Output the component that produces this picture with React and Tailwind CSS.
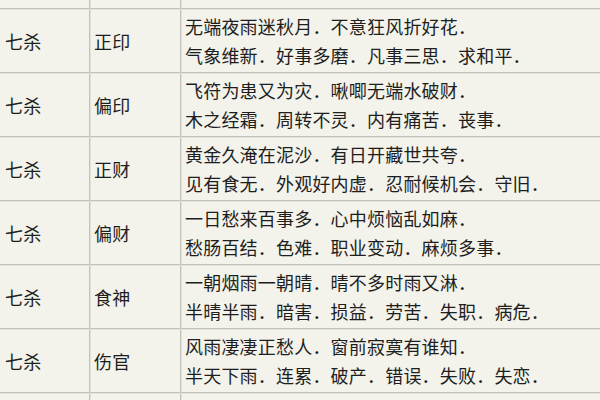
import React from "react";

const rows = [
  ["七杀", "正印", "无端夜雨迷秋月．不意狂风折好花．", "气象维新．好事多磨．凡事三思．求和平．"],
  ["七杀", "偏印", "飞符为患又为灾．啾唧无端水破财．", "木之经霜．周转不灵．内有痛苦．丧事．"],
  ["七杀", "正财", "黄金久淹在泥沙．有日开藏世共夸．", "见有食无．外观好内虚．忍耐候机会．守旧．"],
  ["七杀", "偏财", "一日愁来百事多．心中烦恼乱如麻．", "愁肠百结．色难．职业变动．麻烦多事．"],
  ["七杀", "食神", "一朝烟雨一朝晴．晴不多时雨又淋．", "半晴半雨．暗害．损益．劳苦．失职．病危．"],
  ["七杀", "伤官", "风雨凄凄正愁人．窗前寂寞有谁知．", "半天下雨．连累．破产．错误．失败．失恋．"],
];

const font = { fontFamily: '"Noto Sans CJK SC", "Noto Sans", sans-serif' };

function VLine() {
  return (
    <div className="w-[2px] flex">
      <div className="w-px bg-[#c2c2ba]" />
      <div className="w-px bg-[#e2e2da]" />
    </div>
  );
}

function HLine() {
  return (
    <div className="flex flex-col">
      <div className="h-px bg-[#c2c2ba]" />
      <div className="h-px bg-[#e2e2da]" />
    </div>
  );
}

function Row({ a, b, c, d }) {
  return (
    <div className="flex h-[62px]">
      <div className="w-[89px] flex items-center pl-[5px] text-[18px] tracking-[0.3px]">{a}</div>
      <VLine />
      <div className="w-[89px] flex items-center pl-[3px] text-[18px] tracking-[0.3px]">{b}</div>
      <VLine />
      <div className="flex-1 flex flex-col justify-center pl-[3px] text-[18px] leading-[29px] tracking-[0.2px] whitespace-nowrap">
        <div>{c}</div>
        <div>{d}</div>
      </div>
    </div>
  );
}

function Spacer() {
  return (
    <div className="flex h-[8px]">
      <div className="w-[89px]" />
      <VLine />
      <div className="w-[89px]" />
      <VLine />
      <div className="flex-1" />
    </div>
  );
}

export default function App() {
  return (
    <div className="w-[600px] h-[400px] overflow-hidden bg-[#f3f3eb] text-[#1e1e1e]" style={font}>
      <Spacer />
      {rows.map((r, i) => (
        <React.Fragment key={i}>
          <HLine />
          <Row a={r[0]} b={r[1]} c={r[2]} d={r[3]} />
        </React.Fragment>
      ))}
      <HLine />
      <Spacer />
    </div>
  );
}
